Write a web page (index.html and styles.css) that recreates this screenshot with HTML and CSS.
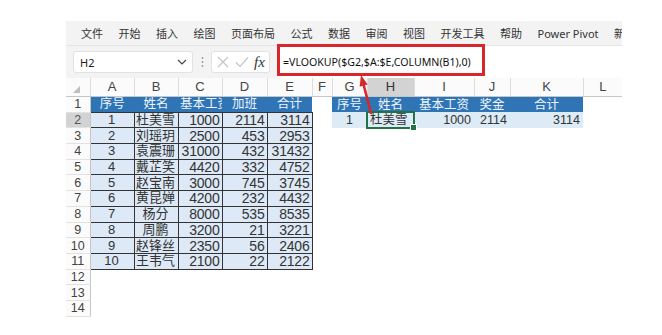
FILE: index.html
```html
<!DOCTYPE html>
<html lang="zh">
	<head>
		<meta charset="UTF-8" />
		<meta name="viewport" content="width=device-width, initial-scale=1.0" />
		<title>VLOOKUP COLUMN</title>
		<link rel="stylesheet" href="styles.css">
	</head>
	<body>
		<div class="app">
			<div class="ribbon">
				<span>文件</span>
				<span>开始</span>
				<span>插入</span>
				<span>绘图</span>
				<span>页面布局</span>
				<span>公式</span>
				<span>数据</span>
				<span>审阅</span>
				<span>视图</span>
				<span>开发工具</span>
				<span>帮助</span>
				<span>Power Pivot</span>
				<span>新</span>
			</div>
			<div class="formula-bar">
				<div class="name-box">
					<span>H2</span>
					<svg width="10" height="6" viewBox="0 0 10 6">
						<path d="M1 1 L5 5 L9 1" fill="none" stroke="#444" stroke-width="1.2" />
					</svg>
				</div>
				<div class="dots">
					<svg width="3" height="12" viewBox="0 0 3 12">
						<circle cx="1.5" cy="2" r="0.9" fill="#999" />
						<circle cx="1.5" cy="6" r="0.9" fill="#999" />
						<circle cx="1.5" cy="10" r="0.9" fill="#999" />
					</svg>
				</div>
				<div class="fx-box">
					<svg width="14" height="14" viewBox="0 0 14 14">
						<path d="M2 2 L12 12 M12 2 L2 12" stroke="#c4c4c4" stroke-width="1.2" />
					</svg>
					<svg width="14" height="14" viewBox="0 0 14 14">
						<path d="M1 7.5 L5 11.5 L13 2.5" fill="none" stroke="#c4c4c4" stroke-width="1.2" />
					</svg>
					<span class="fx">fx</span>
				</div>
				<div class="formula-input">=VLOOKUP($G2,$A:$E,COLUMN(B1),0)</div>
			</div>
			<table class="sheet">
				<colgroup>
					<col class="w-rh">
					<col class="w-44"><col class="w-44"><col class="w-44">
					<col class="w-45"><col class="w-45">
					<col class="w-f"><col class="w-g"><col class="w-h">
					<col class="w-i"><col class="w-j"><col class="w-k"><col class="w-l">
				</colgroup>
				<tr class="heads">
					<th class="corner"><i></i></th>
					<th>A</th><th>B</th><th>C</th><th>D</th><th>E</th><th>F</th>
					<th>G</th><th class="sel">H</th><th>I</th><th>J</th><th>K</th><th>L</th>
				</tr>
				<tr>
					<th class="rh">1</th>
					<td class="hd">序号</td><td class="hd">姓名</td><td class="hd left">基本工资</td><td class="hd">加班</td><td class="hd">合计</td>
					<td></td>
					<td class="hd">序号</td><td class="hd">姓名</td><td class="hd">基本工资</td><td class="hd">奖金</td><td class="hd">合计</td>
					<td></td>
				</tr>
				<tr>
					<th class="rh sel">2</th>
					<td class="d c">1</td><td class="d c">杜美雪</td><td class="d r">1000</td><td class="d r">2114</td><td class="d r">3114</td>
					<td></td>
					<td class="lb c">1</td><td class="lb active">杜美雪</td><td class="lb r">1000</td><td class="lb r">2114</td><td class="lb r">3114</td>
					<td></td>
				</tr>
				<tr>
					<th class="rh">3</th>
					<td class="d c">2</td><td class="d c">刘瑶玥</td><td class="d r">2500</td><td class="d r">453</td><td class="d r">2953</td>
					<td></td><td></td><td></td><td></td><td></td><td></td><td></td>
				</tr>
				<tr>
					<th class="rh">4</th>
					<td class="d c">3</td><td class="d c">袁震珊</td><td class="d r">31000</td><td class="d r">432</td><td class="d r">31432</td>
					<td></td><td></td><td></td><td></td><td></td><td></td><td></td>
				</tr>
				<tr>
					<th class="rh">5</th>
					<td class="d c">4</td><td class="d c">戴芷笑</td><td class="d r">4420</td><td class="d r">332</td><td class="d r">4752</td>
					<td></td><td></td><td></td><td></td><td></td><td></td><td></td>
				</tr>
				<tr>
					<th class="rh">6</th>
					<td class="d c">5</td><td class="d c">赵宝南</td><td class="d r">3000</td><td class="d r">745</td><td class="d r">3745</td>
					<td></td><td></td><td></td><td></td><td></td><td></td><td></td>
				</tr>
				<tr>
					<th class="rh">7</th>
					<td class="d c">6</td><td class="d c">黄昆婵</td><td class="d r">4200</td><td class="d r">232</td><td class="d r">4432</td>
					<td></td><td></td><td></td><td></td><td></td><td></td><td></td>
				</tr>
				<tr>
					<th class="rh">8</th>
					<td class="d c">7</td><td class="d c">杨分</td><td class="d r">8000</td><td class="d r">535</td><td class="d r">8535</td>
					<td></td><td></td><td></td><td></td><td></td><td></td><td></td>
				</tr>
				<tr>
					<th class="rh">9</th>
					<td class="d c">8</td><td class="d c">周鹏</td><td class="d r">3200</td><td class="d r">21</td><td class="d r">3221</td>
					<td></td><td></td><td></td><td></td><td></td><td></td><td></td>
				</tr>
				<tr>
					<th class="rh">10</th>
					<td class="d c">9</td><td class="d c">赵锋丝</td><td class="d r">2350</td><td class="d r">56</td><td class="d r">2406</td>
					<td></td><td></td><td></td><td></td><td></td><td></td><td></td>
				</tr>
				<tr>
					<th class="rh">11</th>
					<td class="d c">10</td><td class="d c">王韦气</td><td class="d r">2100</td><td class="d r">22</td><td class="d r">2122</td>
					<td></td><td></td><td></td><td></td><td></td><td></td><td></td>
				</tr>
				<tr>
					<th class="rh">12</th>
					<td></td><td></td><td></td><td></td><td></td><td></td><td></td><td></td><td></td><td></td><td></td><td></td>
				</tr>
				<tr>
					<th class="rh">13</th>
					<td></td><td></td><td></td><td></td><td></td><td></td><td></td><td></td><td></td><td></td><td></td><td></td>
				</tr>
				<tr>
					<th class="rh">14</th>
					<td></td><td></td><td></td><td></td><td></td><td></td><td></td><td></td><td></td><td></td><td></td><td></td>
				</tr>
			</table>
			<!-- annotation: red box + arrow -->
			<div class="red-box"></div>
			<svg class="arrow" width="30" height="70" viewBox="0 0 30 70">
				<path d="M12.4 13 L20 42" stroke="#d8262b" stroke-width="2.6" stroke-linecap="round" />
				<polygon points="10,4 16.6,13.6 8.6,15.8" fill="#d8262b" />
			</svg>
		</div>
	</body>
</html>
```
FILE: styles.css
```css
* {
	padding: 0;
	margin: 0;
	box-sizing: border-box;
}
body {
	background: #fff;
	font-family: "Liberation Sans", "Noto Sans CJK SC", sans-serif;
	color: #222;
}
.app {
	position: relative;
	width: 556px;
	margin: 21px 0 0 66px;
}
.ribbon {
	display: flex;
	align-items: center;
	column-gap: 15.5px;
	height: 24px;
	padding-left: 15px;
	background: #f3f3f3;
	font-family: "Noto Sans", "Noto Sans CJK SC", sans-serif;
	font-size: 11px;
	color: #333;
	white-space: nowrap;
	overflow: hidden;
}
.formula-bar {
	display: flex;
	align-items: center;
	height: 33px;
	background: #f3f3f3;
	border-top: 1px solid #e4e4e4;
}
.name-box {
	display: flex;
	align-items: center;
	justify-content: space-between;
	width: 120px;
	height: 22px;
	margin-left: 7px;
	padding: 0 5px 0 6px;
	background: #fff;
	border: 1px solid #e2e2e2;
	border-radius: 3px;
	font-family: "Noto Sans", sans-serif;
	font-size: 11px;
	color: #222;
}
.dots {
	display: flex;
	width: 18px;
	justify-content: center;
}
.fx-box {
	display: flex;
	align-items: center;
	column-gap: 5px;
	width: 59px;
	height: 22px;
	padding-left: 4px;
	background: #fff;
	border: 1px solid #e2e2e2;
	border-radius: 3px;
}
.fx {
	font-family: "Liberation Serif", serif;
	font-style: italic;
	font-size: 15px;
	color: #333;
}
.formula-input {
	display: flex;
	align-items: center;
	align-self: stretch;
	flex: 1;
	margin-left: 7px;
	padding-left: 6px;
	background: #fff;
	font-family: "Noto Sans", sans-serif;
	font-size: 10.6px;
	color: #111;
}
.sheet {
	width: 556px;
	table-layout: fixed;
	border-collapse: collapse;
}
.w-rh { width: 24px; }
.w-44 { width: 44px; }
.w-45 { width: 45px; }
.w-f { width: 20px; }
.w-g { width: 35px; }
.w-h { width: 47px; }
.w-i { width: 60px; }
.w-j { width: 36px; }
.w-k { width: 73px; }
.w-l { width: 39px; }
.sheet tr {
	height: 15.7px;
}
.sheet tr.heads {
	height: 18.5px;
}
.heads th {
	font-weight: normal;
	font-size: 13px;
	color: #444;
	background: #fbfbfb;
	border-right: 1px solid #dcdcdc;
	border-bottom: 1px solid #c6c6c6;
	line-height: 16px;
}
.heads th:last-child {
	border-right: none;
}
.heads th.sel {
	background: #d3d3d3;
	color: #333;
}
.corner {
	position: relative;
}
.corner i {
	position: absolute;
	right: 10px;
	bottom: 3px;
	width: 0;
	height: 0;
	border-left: 7px solid transparent;
	border-bottom: 7px solid #bdbdbd;
}
.rh {
	font-weight: normal;
	font-size: 12.5px;
	color: #444;
	background: #fbfbfb;
	border-right: 1px solid #c6c6c6;
	border-bottom: 1px solid #e2e2e2;
	line-height: 14px;
}
.rh.sel {
	background: #d3d3d3;
	color: #555;
}
.sheet td {
	padding: 0 3px;
	line-height: 14px;
	white-space: nowrap;
	overflow: hidden;
}
.hd {
	background: #2f75b5;
	color: #eef4fb;
	font-size: 12.5px;
	text-align: center;
}
.sheet td.hd.left {
	text-align: left;
	padding-left: 2px;
	text-overflow: clip;
}
.sheet td.d {
	padding: 0 2px 0 1px;
	background: #dde9f6;
	border: 1px solid #333;
	font-size: 13px;
	color: #333;
}
.sheet td.d.r {
	font-size: 14px;
	letter-spacing: -0.2px;
}
.lb {
	background: #ddebf7;
	font-size: 12.5px;
	color: #333;
}
.c {
	text-align: center;
}
.r {
	text-align: right;
}
.active {
	position: relative;
	overflow: visible !important;
	outline: 2px solid #217346;
	outline-offset: -1px;
}
.active::after {
	content: "";
	position: absolute;
	right: -3px;
	bottom: -3px;
	width: 5px;
	height: 5px;
	background: #217346;
	border: 1px solid #fff;
}
.red-box {
	position: absolute;
	left: 211px;
	top: 23px;
	width: 208px;
	height: 32px;
	border: 3px solid #d8262b;
}
.arrow {
	position: absolute;
	left: 285px;
	top: 50px;
}
```
